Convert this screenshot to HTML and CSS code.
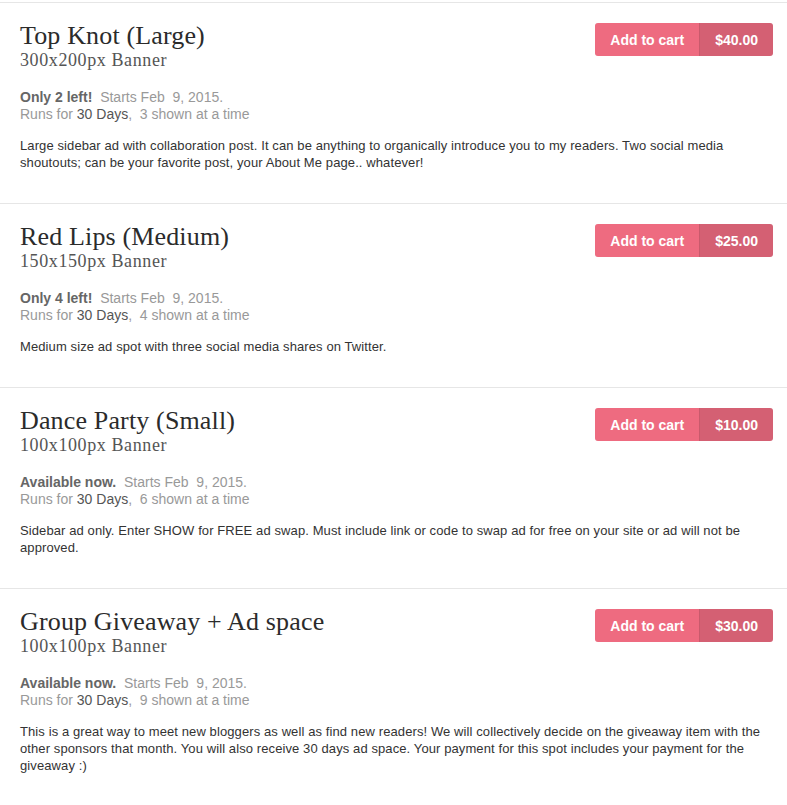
FILE: index.html
```html
<!DOCTYPE html>
<html lang="en">
<head>
  <meta charset="UTF-8" />
  <title>Sponsor Spots</title>
  <link rel="stylesheet" href="styles.css">
</head>
<body>

  <div class="ads">

    <div class="ad">
      <div class="ad-head">
        <div>
          <h2 class="ad-title">Top Knot (Large)</h2>
          <div class="ad-size">300x200px Banner</div>
        </div>
        <button class="cart"><span class="cart-label">Add to cart</span><span class="cart-price">$40.00</span></button>
      </div>
      <div class="ad-meta">
        <b>Only 2 left!</b>&nbsp; Starts Feb &nbsp;9, 2015.<br>
        Runs for <span class="dark">30 Days</span>, &nbsp;3 shown at a time
      </div>
      <p class="ad-desc">Large sidebar ad with collaboration post. It can be anything to organically introduce you to my readers. Two social media shoutouts; can be your favorite post, your About Me page.. whatever!</p>
    </div>

    <div class="ad">
      <div class="ad-head">
        <div>
          <h2 class="ad-title">Red Lips (Medium)</h2>
          <div class="ad-size">150x150px Banner</div>
        </div>
        <button class="cart"><span class="cart-label">Add to cart</span><span class="cart-price">$25.00</span></button>
      </div>
      <div class="ad-meta">
        <b>Only 4 left!</b>&nbsp; Starts Feb &nbsp;9, 2015.<br>
        Runs for <span class="dark">30 Days</span>, &nbsp;4 shown at a time
      </div>
      <p class="ad-desc">Medium size ad spot with three social media shares on Twitter.</p>
    </div>

    <div class="ad">
      <div class="ad-head">
        <div>
          <h2 class="ad-title">Dance Party (Small)</h2>
          <div class="ad-size">100x100px Banner</div>
        </div>
        <button class="cart"><span class="cart-label">Add to cart</span><span class="cart-price">$10.00</span></button>
      </div>
      <div class="ad-meta">
        <b>Available now.</b>&nbsp; Starts Feb &nbsp;9, 2015.<br>
        Runs for <span class="dark">30 Days</span>, &nbsp;6 shown at a time
      </div>
      <p class="ad-desc">Sidebar ad only. Enter SHOW for FREE ad swap. Must include link or code to swap ad for free on your site or ad will not be approved.</p>
    </div>

    <div class="ad">
      <div class="ad-head">
        <div>
          <h2 class="ad-title">Group Giveaway + Ad space</h2>
          <div class="ad-size">100x100px Banner</div>
        </div>
        <button class="cart"><span class="cart-label">Add to cart</span><span class="cart-price">$30.00</span></button>
      </div>
      <div class="ad-meta">
        <b>Available now.</b>&nbsp; Starts Feb &nbsp;9, 2015.<br>
        Runs for <span class="dark">30 Days</span>, &nbsp;9 shown at a time
      </div>
      <p class="ad-desc">This is a great way to meet new bloggers as well as find new readers! We will collectively decide on the giveaway item with the other sponsors that month. You will also receive 30 days ad space. Your payment for this spot includes your payment for the giveaway :)</p>
    </div>

  </div>

</body>
</html>
```

FILE: styles.css
```css
body {
  margin: 0;
  background-color: #fff;
  font-family: "Liberation Sans", Arial, sans-serif;
  color: #333;
}
.ads {
  padding-top: 2px;
}
.ad {
  border-top: 1px solid #e6e6e6;
  padding: 18px 14px 32px 20px;
}
.ad-head {
  display: flex;
  justify-content: space-between;
  align-items: flex-start;
}
.ad-title {
  font-family: "Liberation Serif", "Times New Roman", serif;
  font-weight: normal;
  font-size: 26px;
  letter-spacing: 0.15px;
  line-height: 29px;
  color: #2b2b2b;
  margin: 0;
}
.ad-size {
  font-family: "Liberation Serif", "Times New Roman", serif;
  font-size: 18px;
  letter-spacing: 0.6px;
  line-height: 20px;
  color: #555;
}
.cart {
  display: flex;
  margin-top: 2px;
  padding: 0;
  border: none;
  border-radius: 3px;
  overflow: hidden;
  font-family: "Liberation Sans", Arial, sans-serif;
  font-size: 14px;
  font-weight: bold;
  color: #fff;
  cursor: pointer;
}
.cart-label {
  background-color: #ee6b80;
  padding: 1px 15px 0;
  line-height: 32px;
  border-right: 1px solid #c95a6c;
}
.cart-price {
  background-color: #d46073;
  padding: 1px 15px 0;
  line-height: 32px;
}
.ad-meta {
  margin-top: 19px;
  font-size: 14px;
  line-height: 17px;
  color: #999;
}
.ad-meta b {
  color: #666;
}
.dark {
  color: #555;
}
.ad-desc {
  margin: 14px 0 0;
  font-size: 13px;
  letter-spacing: 0.1px;
  line-height: 17px;
  color: #333;
}
```
